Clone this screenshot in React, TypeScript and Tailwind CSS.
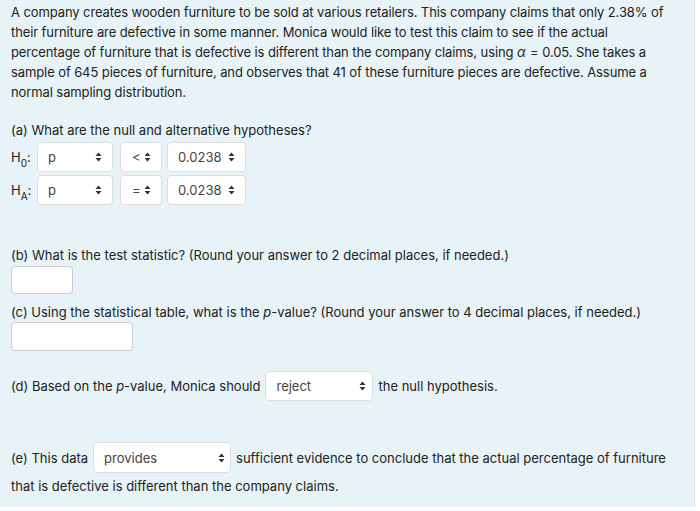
import React from "react";

function Arrows() {
  return (
    <svg width="7" height="10" viewBox="0 0 7 10" className="shrink-0">
      <path d="M3.5 0.5 L6.5 4 L0.5 4 Z" fill="#333" />
      <path d="M3.5 9.5 L6.5 6 L0.5 6 Z" fill="#333" />
    </svg>
  );
}

function Sel({ value, w, h, pl, pr }: { value: string; w: string; h: string; pl: string; pr: string }) {
  return (
    <div className={`flex items-center justify-between bg-white border border-[#dcdfe0] rounded-[4px] text-[#444] ${w} ${h} ${pl} ${pr}`}>
      <span>{value}</span>
      <Arrows />
    </div>
  );
}

export default function App() {
  return (
    <div className="w-[700px] h-[511px] bg-white text-[13px] leading-[20px] text-[#222]" style={{ fontFamily: "Inter, 'Helvetica Neue', Arial, sans-serif" }}>
      <div className="w-[695px] h-[507px] bg-[#e7f3f6] border-r border-[#d3e0e3] flex flex-col px-[11px] pt-[2px]">
        <p className="w-[666px] tracking-[-0.1px]">
          A company creates wooden furniture to be sold at various retailers. This company claims that only 2.38% of their furniture are defective in some manner. Monica would like to test this claim to see if the actual percentage of furniture that is defective is different than the company claims, using <span className="italic pr-[1px]">α</span> = 0.05. She takes a sample of 645 pieces of furniture, and observes that 41 of these furniture pieces are defective. Assume a normal sampling distribution.
        </p>
        <p className="mt-[18px]">(a) What are the null and alternative hypotheses?</p>
        <div className="mt-[2px] flex flex-col gap-[3px]">
          <div className="flex items-center">
            <span className="w-[26px]">H<sub className="text-[10px] align-[-2px]">0</sub>:</span>
            <Sel value="p" w="w-[76px]" h="h-[30px]" pl="pl-[10px]" pr="pr-[10px]" />
            <div className="w-[7px]" />
            <Sel value="<" w="w-[42px]" h="h-[30px]" pl="pl-[11px]" pr="pr-[10px]" />
            <div className="w-[5px]" />
            <Sel value="0.0238" w="w-[79px]" h="h-[30px]" pl="pl-[10px]" pr="pr-[10px]" />
          </div>
          <div className="flex items-center">
            <span className="w-[26px]">H<sub className="text-[10px] align-[-2px]">A</sub>:</span>
            <Sel value="p" w="w-[76px]" h="h-[30px]" pl="pl-[10px]" pr="pr-[10px]" />
            <div className="w-[7px]" />
            <Sel value="=" w="w-[42px]" h="h-[30px]" pl="pl-[11px]" pr="pr-[10px]" />
            <div className="w-[5px]" />
            <Sel value="0.0238" w="w-[79px]" h="h-[30px]" pl="pl-[10px]" pr="pr-[10px]" />
          </div>
        </div>
        <p className="mt-[40px]">(b) What is the test statistic? (Round your answer to 2 decimal places, if needed.)</p>
        <div className="mt-[1px] w-[62px] h-[28px] bg-white border border-[#c9cdce] rounded-[4px]" />
        <p className="mt-[8px]">(c) Using the statistical table, what is the <i>p</i>-value? (Round your answer to 4 decimal places, if needed.)</p>
        <div className="mt-[0px] w-[122px] h-[29px] bg-white border border-[#c9cdce] rounded-[4px]" />
        <div className="mt-[20px] flex items-center">
          <span>(d) Based on the <i>p</i>-value, Monica should</span>
          <div className="w-[5px]" />
          <Sel value="reject" w="w-[108px]" h="h-[30px]" pl="pl-[10px]" pr="pr-[6px]" />
          <span className="ml-[5px]">the null hypothesis.</span>
        </div>
        <div className="mt-[41px] flex items-center">
          <span>(e) This data</span>
          <div className="w-[5px]" />
          <Sel value="provides" w="w-[138px]" h="h-[31px]" pl="pl-[10px]" pr="pr-[5px]" />
          <span className="ml-[5px]">sufficient evidence to conclude that the actual percentage of furniture</span>
        </div>
        <p className="mt-[3px]">that is defective is different than the company claims.</p>
      </div>
    </div>
  );
}
